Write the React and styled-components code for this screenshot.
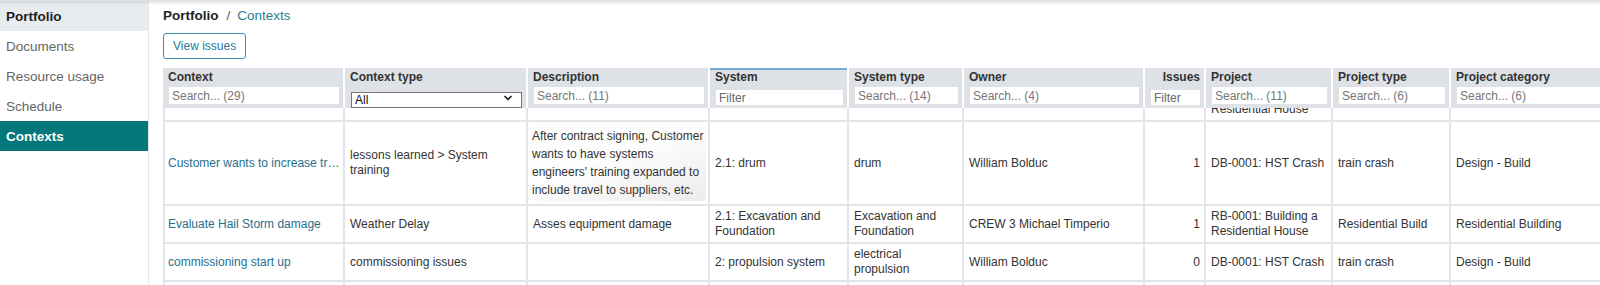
import styled, { createGlobalStyle } from "styled-components";
import { ChevronDown } from "lucide-react";

const GlobalStyle = createGlobalStyle`
  html, body {
    margin: 0;
    padding: 0;
    background: #fff;
  }
  body {
    font-family: "Liberation Sans", Arial, sans-serif;
    color: #333;
    overflow: hidden;
  }
  * {
    box-sizing: border-box;
  }
`;

const COLUMNS = "182px 183px 182px 139px 115px 181px 61px 127px 118px 240px";
const LINE = "#e1e4e8";

const Page = styled.div`
  position: relative;
  display: flex;
  height: 285px;
  overflow: hidden;
`;

const TopShade = styled.div`
  position: absolute;
  top: 0;
  left: 0;
  right: 0;
  height: 5px;
  background: linear-gradient(rgba(0, 0, 0, 0.13), rgba(0, 0, 0, 0));
  pointer-events: none;
  z-index: 5;
`;

const Sidebar = styled.nav`
  width: 149px;
  flex-shrink: 0;
  padding-top: 1px;
  border-right: 1px solid #e8e8e8;
`;

const NavItem = styled.a`
  display: flex;
  align-items: center;
  height: 30px;
  padding-left: 6px;
  font-size: 13.5px;
  text-decoration: none;
  color: ${(p) => (p.$active ? "#fff" : p.$root ? "#222" : "#666")};
  background: ${(p) => (p.$active ? "#04777b" : p.$root ? "#e9ecef" : "transparent")};
  font-weight: ${(p) => (p.$active || p.$root ? 700 : 400)};
`;

const Main = styled.main`
  flex: 1;
  min-width: 0;
  padding-left: 14px;
  overflow: hidden;
`;

const Breadcrumb = styled.div`
  height: 26px;
  padding-top: 6px;
  line-height: 20px;
  font-size: 13.5px;
  color: #222;

  b {
    font-weight: 700;
  }
  .sep {
    color: #555;
    padding: 0 7px 0 8px;
  }
  .current {
    color: #2f7d95;
  }
`;

const Button = styled.button`
  display: block;
  margin-top: 7px;
  height: 26px;
  padding: 0 9px;
  background: #fff;
  border: 1px solid #3e8db0;
  border-radius: 3px;
  color: #2d7a98;
  font-family: inherit;
  font-size: 12px;
`;

const Table = styled.div`
  margin-top: 9px;
  width: max-content;
`;

const Row = styled.div`
  display: grid;
  grid-template-columns: ${COLUMNS};
  height: ${(p) => p.$height || "auto"};
`;

const HeadCell = styled.div`
  display: flex;
  flex-direction: column;
  align-items: ${(p) => (p.$right ? "flex-end" : "stretch")};
  height: 40px;
  padding: 2px 4px 0 5px;
  background: #dee2e6;
  border-right: 2px solid #fff;
  box-shadow: ${(p) => (p.$sorted ? "inset 0 2px 0 #79a9cf" : "none")};
`;

const HeadTitle = styled.div`
  font-size: 12px;
  font-weight: 700;
  line-height: 15px;
  color: #333;
  white-space: nowrap;
`;

const SearchInput = styled.input`
  display: block;
  width: calc(100% - 1px);
  margin: ${(p) => (p.$compact ? "5px 0 0 1px" : "2px 0 0 1px")};
  height: ${(p) => (p.$compact ? "15px" : "17px")};
  padding: 0 3px;
  border: none;
  outline: none;
  background: #fff;
  font-family: inherit;
  font-size: 12px;
  color: #333;

  &::placeholder {
    color: ${(p) => (p.$compact ? "#666" : "#777")};
  }
`;

const SelectWrap = styled.div`
  position: relative;
  margin: 5px 0 0 1px;
  height: 16px;

  svg {
    position: absolute;
    right: 8px;
    top: 2px;
    pointer-events: none;
    color: #222;
  }
`;

const Select = styled.select`
  appearance: none;
  width: 100%;
  height: 16px;
  padding: 0 3px;
  border: 1px solid #767676;
  border-radius: 0;
  background: #fff;
  font-family: inherit;
  font-size: 12px;
  line-height: 14px;
  color: #111;
`;

const Cell = styled.div`
  display: flex;
  align-items: ${(p) => (p.$bottom ? "flex-end" : "center")};
  justify-content: ${(p) => (p.$right ? "flex-end" : "flex-start")};
  min-width: 0;
  overflow: hidden;
  padding: ${(p) => (p.$bottom ? "0 4px 3px 5px" : "3px 4px 3px 5px")};
  border-right: 2px solid ${LINE};
  border-bottom: 2px solid ${LINE};
  font-size: 12px;
  line-height: 15px;
  color: #333;

  &:first-child {
    border-left: 2px solid ${LINE};
    padding-left: 3px;
    padding-right: 1px;
  }
`;

const DescCell = styled(Cell)`
  padding: 3px 2px;
`;

const DescBox = styled.div`
  width: 100%;
  padding: 2px 2px;
  border-radius: 4px;
  line-height: 18px;
  background: linear-gradient(160deg, #fdfdfd 45%, #ececec);
`;

const Link = styled.a`
  color: #276f8d;
  text-decoration: none;
  white-space: nowrap;
  overflow: hidden;
  text-overflow: ellipsis;
  min-width: 0;
`;

const headers = [
  { title: "Context", filter: "Search... (29)" },
  { title: "Context type", select: true },
  { title: "Description", filter: "Search... (11)" },
  { title: "System", filter: "Filter", compact: true, sorted: true },
  { title: "System type", filter: "Search... (14)" },
  { title: "Owner", filter: "Search... (4)" },
  { title: "Issues", filter: "Filter", compact: true, right: true },
  { title: "Project", filter: "Search... (11)" },
  { title: "Project type", filter: "Search... (6)" },
  { title: "Project category", filter: "Search... (6)" },
];

const rows = [
  {
    context: "Customer wants to increase training scope for engineers",
    type: "lessons learned > System training",
    description:
      "After contract signing, Customer wants to have systems engineers' training expanded to include travel to suppliers, etc.",
    system: "2.1: drum",
    systemType: "drum",
    owner: "William Bolduc",
    issues: 1,
    project: "DB-0001: HST Crash",
    projectType: "train crash",
    category: "Design - Build",
  },
  {
    context: "Evaluate Hail Storm damage",
    type: "Weather Delay",
    description: "Asses equipment damage",
    system: "2.1: Excavation and Foundation",
    systemType: "Excavation and Foundation",
    owner: "CREW 3 Michael Timperio",
    issues: 1,
    project: "RB-0001: Building a Residential House",
    projectType: "Residential Build",
    category: "Residential Building",
  },
  {
    context: "commissioning start up",
    type: "commissioning issues",
    description: "",
    system: "2: propulsion system",
    systemType: "electrical propulsion",
    owner: "William Bolduc",
    issues: 0,
    project: "DB-0001: HST Crash",
    projectType: "train crash",
    category: "Design - Build",
  },
];

function HeaderRow() {
  return (
    <Row>
      {headers.map((h) => (
        <HeadCell key={h.title} $right={h.right} $sorted={h.sorted}>
          <HeadTitle>{h.title}</HeadTitle>
          {h.select ? (
            <SelectWrap>
              <Select defaultValue="all">
                <option value="all">All</option>
              </Select>
              <ChevronDown size={12} strokeWidth={3.5} />
            </SelectWrap>
          ) : (
            <SearchInput placeholder={h.filter} $compact={h.compact} />
          )}
        </HeadCell>
      ))}
    </Row>
  );
}

function DataRow({ row }) {
  const long = row.description.length > 40;
  return (
    <Row>
      <Cell>
        <Link href="#">{row.context}</Link>
      </Cell>
      <Cell>{row.type}</Cell>
      {long ? (
        <DescCell>
          <DescBox>{row.description}</DescBox>
        </DescCell>
      ) : (
        <Cell>{row.description}</Cell>
      )}
      <Cell>{row.system}</Cell>
      <Cell>{row.systemType}</Cell>
      <Cell>{row.owner}</Cell>
      <Cell $right>{row.issues}</Cell>
      <Cell>{row.project}</Cell>
      <Cell>{row.projectType}</Cell>
      <Cell>{row.category}</Cell>
    </Row>
  );
}

export default function App() {
  return (
    <>
      <GlobalStyle />
      <Page>
        <TopShade />
        <Sidebar>
          <NavItem href="#" $root>
            Portfolio
          </NavItem>
          <NavItem href="#">Documents</NavItem>
          <NavItem href="#">Resource usage</NavItem>
          <NavItem href="#">Schedule</NavItem>
          <NavItem href="#" $active>
            Contexts
          </NavItem>
        </Sidebar>
        <Main>
          <Breadcrumb>
            <b>Portfolio</b>
            <span className="sep">/</span>
            <span className="current">Contexts</span>
          </Breadcrumb>
          <Button>View issues</Button>
          <Table>
            <HeaderRow />
            <Row $height="14px">
              {headers.map((h, i) => (
                <Cell key={h.title} $bottom>
                  {i === 7 ? "RB-0001: Building a Residential House" : ""}
                </Cell>
              ))}
            </Row>
            {rows.map((row) => (
              <DataRow key={row.context} row={row} />
            ))}
            <Row $height="20px">
              {headers.map((h) => (
                <Cell key={h.title} />
              ))}
            </Row>
          </Table>
        </Main>
      </Page>
    </>
  );
}
